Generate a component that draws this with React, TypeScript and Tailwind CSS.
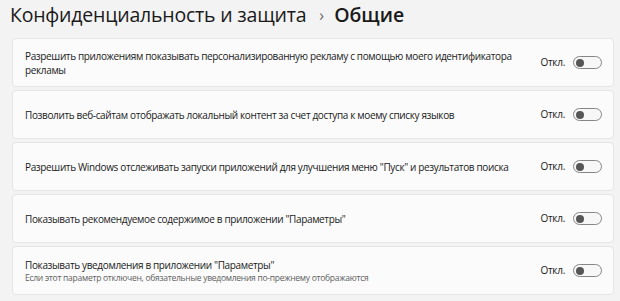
import React from "react";

const rows: { title: string; sub?: string }[] = [
  { title: "Разрешить приложениям показывать персонализированную рекламу с помощью моего идентификатора рекламы" },
  { title: "Позволить веб-сайтам отображать локальный контент за счет доступа к моему списку языков" },
  { title: 'Разрешить Windows отслеживать запуски приложений для улучшения меню "Пуск" и результатов поиска' },
  { title: 'Показывать рекомендуемое содержимое в приложении "Параметры"' },
  {
    title: 'Показывать уведомления в приложении "Параметры"',
    sub: "Если этот параметр отключен, обязательные уведомления по-прежнему отображаются",
  },
];

function Toggle() {
  return (
    <div className="w-[29px] h-[13px] rounded-full border border-[#868686] bg-[#f7f7f7] flex items-center px-[2px]">
      <div className="w-[8px] h-[8px] rounded-full bg-[#565656]" />
    </div>
  );
}

export default function App() {
  return (
    <div
      className="w-[620px] h-[301px] bg-[#f3f3f3] overflow-hidden text-[#1a1a1a]"
      style={{ fontFamily: '"Open Sans", "Noto Sans", sans-serif' }}
    >
      <div className="flex items-center h-[29px] pl-[10px]">
        <span className="text-[19.5px] leading-none tracking-[-0.2px]">Конфиденциальность и защита</span>
        <span className="text-[16px] text-[#666] ml-[13px] mr-[10px] leading-none">›</span>
        <span className="text-[19.5px] font-semibold leading-none">Общие</span>
      </div>
      <div className="flex flex-col gap-[3px] pl-[12px] pr-[6px] pt-[9px]">
        {rows.map((r, i) => (
          <div
            key={i}
            className="h-[49px] bg-[#fbfbfb] border border-[#e5e5e5] rounded-[4px] flex items-center pl-[12px] pr-[11px]"
          >
            <div className="flex-1 min-w-0 pr-[20px]">
              <div className="text-[10px] leading-[14px] tracking-[-0.36px]">{r.title}</div>
              {r.sub && (
                <div className="text-[8.5px] leading-[11px] tracking-[-0.27px] text-[#5f5f5f]">{r.sub}</div>
              )}
            </div>
            <span className="text-[10px] tracking-[-0.3px] mr-[8px]">Откл.</span>
            <Toggle />
          </div>
        ))}
      </div>
    </div>
  );
}
